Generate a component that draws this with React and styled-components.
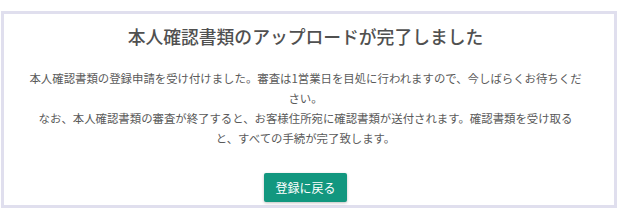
import React from "react";
import styled, { createGlobalStyle } from "styled-components";

const GlobalStyle = createGlobalStyle`
  html, body {
    margin: 0;
    padding: 0;
    background: #ffffff;
  }
  body {
    font-family: "Noto Sans CJK JP", "Noto Sans", sans-serif;
  }
`;

const Page = styled.div`
  padding: 11px 3px 0 1px;
  width: 620px;
  box-sizing: border-box;
`;

const Card = styled.section`
  box-sizing: border-box;
  width: 616px;
  height: 197px;
  border: 3px solid #e0dfee;
  background: #ffffff;
  display: flex;
  flex-direction: column;
  align-items: center;
  padding: 10px 7px 0 0;
`;

const Title = styled.h1`
  margin: 0;
  font-size: 17.8px;
  line-height: 24px;
  font-weight: 500;
  color: #505050;
  text-align: center;
`;

const Body = styled.div`
  margin-top: 20px;
  width: 556px;
  text-align: center;
  color: #5a5a5a;
  font-size: 11.4px;
  line-height: 20px;
`;

const Paragraph = styled.p`
  margin: 0;
`;

const Button = styled.button`
  margin-top: 25px;
  width: 83px;
  height: 29px;
  border: none;
  border-radius: 2px;
  background: #12977f;
  color: #ffffff;
  font-family: "Noto Sans CJK JP", "Noto Sans", sans-serif;
  font-size: 12px;
  box-shadow: 0 1px 3px rgba(0, 0, 0, 0.25);
  cursor: pointer;
  padding: 0;
`;

export default function App() {
  return (
    <>
      <GlobalStyle />
      <Page>
        <Card>
          <Title>本人確認書類のアップロードが完了しました</Title>
          <Body>
            <Paragraph>
              本人確認書類の登録申請を受け付けました。審査は1営業日を目処に行われますので、今しばらくお待ちください。
            </Paragraph>
            <Paragraph>
              なお、本人確認書類の審査が終了すると、お客様住所宛に確認書類が送付されます。確認書類を受け取ると、すべての手続が完了致します。
            </Paragraph>
          </Body>
          <Button>登録に戻る</Button>
        </Card>
      </Page>
    </>
  );
}
